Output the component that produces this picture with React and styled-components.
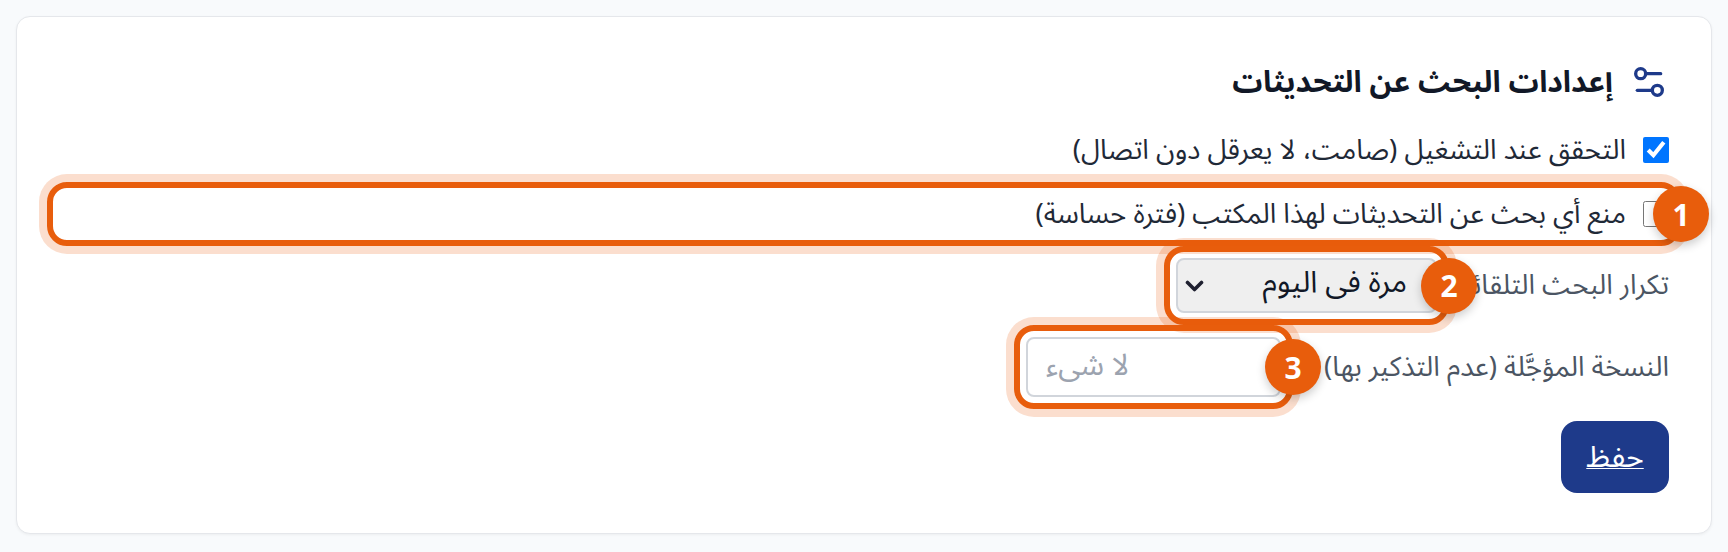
import React from 'react';
import styled, { createGlobalStyle } from 'styled-components';
import { Settings2 } from 'lucide-react';

const FONT = '"Noto Sans Arabic", "Noto Sans", "DejaVu Sans", sans-serif';

const CHEVRON =
  "data:image/svg+xml,%3Csvg xmlns='http://www.w3.org/2000/svg' viewBox='0 0 19 12'%3E%3Cpath d='M2.5 2.5l7 7 7-7' fill='none' stroke='%231f2030' stroke-width='3.6' stroke-linecap='round' stroke-linejoin='round'/%3E%3C/svg%3E";

const GlobalStyle = createGlobalStyle`
  html, body {
    margin: 0;
    background: #f8fafc;
  }
  * {
    box-sizing: border-box;
  }
`;

const Page = styled.div`
  padding: 16px;
  height: 552px;
  font-family: ${FONT};
`;

const Card = styled.section`
  padding: 45px 42px 40px;
  background: #fff;
  border: 1px solid #e5e7eb;
  border-radius: 14px;
  box-shadow: 0 1px 3px rgba(0, 0, 0, 0.05);
  display: flex;
  flex-direction: column;
  gap: 24px;
`;

const Title = styled.h2`
  margin: 0 0 4px;
  height: 40px;
  display: flex;
  align-items: center;
  gap: 16px;
  font-size: 30px;
  font-weight: 700;
  color: #111827;
  svg {
    color: #1e3a8a;
    flex: none;
  }
`;

const CheckRow = styled.label`
  position: relative;
  height: 40px;
  display: flex;
  align-items: center;
  gap: 17px;
  font-size: 27.5px;
  color: #1f2937;
`;

const Check = styled.input.attrs({ type: 'checkbox' })`
  width: 26px;
  height: 26px;
  margin: 0;
  flex: none;
`;

const FieldRow = styled.div`
  display: flex;
  align-items: center;
  gap: 16px;
`;

const FieldLabel = styled.label`
  width: ${(p) => p.$width}px;
  font-size: 27.5px;
  line-height: 1.2;
  color: #4b5563;
  white-space: nowrap;
`;

const Target = styled.div`
  position: relative;
  flex: none;
`;

const Select = styled.select`
  display: block;
  width: 261px;
  height: 55px;
  padding: 0 28px 5px;
  appearance: none;
  font-family: inherit;
  font-size: 30px;
  line-height: 44px;
  color: #111827;
  background: #efefef url("${CHEVRON}") no-repeat 7px center / 19px 12px;
  border: 2px solid #d1d5db;
  border-radius: 8px;
`;

const TextInput = styled.input`
  display: block;
  width: 255px;
  height: 60px;
  padding: 0 18px 4px;
  font-family: inherit;
  font-size: 30px;
  color: #111827;
  background: #fff;
  border: 2px solid #d1d5db;
  border-radius: 8px;
  &::placeholder {
    color: #9ca3af;
  }
`;

const SaveButton = styled.a`
  align-self: flex-start;
  width: 108px;
  height: 72px;
  display: flex;
  align-items: center;
  justify-content: center;
  font-size: 30px;
  color: #fff;
  background: #1e3a8a;
  border-radius: 16px;
  text-decoration: underline;
  text-decoration-thickness: 1px;
`;

// annotation ring laid over the element it marks
const Ring = styled.span`
  position: absolute;
  inset: -12px;
  border: 6px solid #e85d0c;
  border-radius: 20px;
  box-shadow: 0 0 0 8px rgba(234, 88, 12, 0.2);
  pointer-events: none;
`;

const Badge = styled.span`
  position: absolute;
  top: 50%;
  right: -6px;
  width: 56px;
  height: 56px;
  transform: translate(50%, -50%);
  display: flex;
  align-items: center;
  justify-content: center;
  font-family: "Noto Sans", sans-serif;
  font-size: 30px;
  font-weight: 700;
  color: #fff;
  background: #e85d0c;
  border-radius: 50%;
  box-shadow: 0 4px 10px rgba(0, 0, 0, 0.2);
`;

const Mark = ({ n }) => (
  <Ring>
    <Badge>{n}</Badge>
  </Ring>
);

const App = () => (
  <Page dir="rtl">
    <GlobalStyle />
    <Card>
      <Title>
        <Settings2 size={40} strokeWidth={2} />
        إعدادات البحث عن التحديثات
      </Title>
      <CheckRow>
        <Check defaultChecked />
        التحقق عند التشغيل (صامت، لا يعرقل دون اتصال)
      </CheckRow>
      <CheckRow>
        <Check />
        منع أي بحث عن التحديثات لهذا المكتب (فترة حساسة)
        <Mark n={1} />
      </CheckRow>
      <FieldRow>
        <FieldLabel $width={216}>تكرار البحث التلقائي</FieldLabel>
        <Target>
          <Select defaultValue="daily">
            <option value="daily">مرة فى اليوم</option>
          </Select>
          <Mark n={2} />
        </Target>
      </FieldRow>
      <FieldRow>
        <FieldLabel $width={372}>النسخة المؤجَّلة (عدم التذكير بها)</FieldLabel>
        <Target>
          <TextInput dir="ltr" placeholder="لا شىء" />
          <Mark n={3} />
        </Target>
      </FieldRow>
      <SaveButton href="#">حفظ</SaveButton>
    </Card>
  </Page>
);

export default App;
